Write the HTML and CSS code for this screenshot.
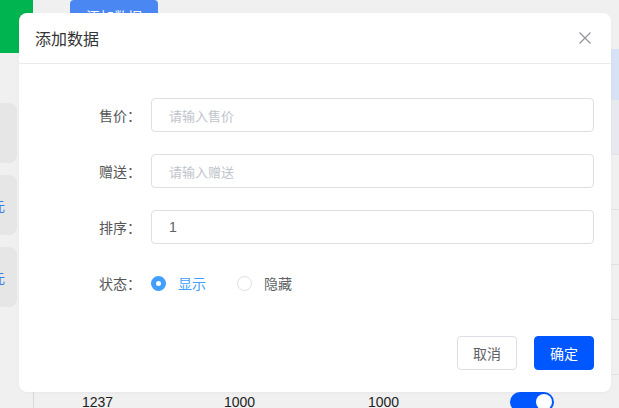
FILE: index.html
```html
<!DOCTYPE html>
<html lang="zh-CN">
<head>
<meta charset="utf-8">
<title>充值套餐</title>
<link rel="stylesheet" href="styles.css">
</head>
<body>
<div class="page">
  <aside class="side">
    <div class="logo"></div>
    <div class="cards">
      <div class="card"><span>充值</span></div>
      <div class="card"><span>100元</span></div>
      <div class="card"><span>500元</span></div>
    </div>
  </aside>
  <main class="main">
    <div class="toolbar">
      <button class="btn-add">添加数据</button>
    </div>
    <div class="table">
      <div class="row head"></div>
      <div class="row hover"></div>
      <div class="row"></div>
      <div class="row"></div>
      <div class="row"></div>
      <div class="row"></div>
      <div class="row">
        <span>1237</span>
        <span>1000</span>
        <span>1000</span>
        <span class="switch"><i></i></span>
      </div>
    </div>
  </main>

  <div class="dialog">
    <div class="dialog-head">
      <span class="dialog-title">添加数据</span>
      <svg class="close" width="12" height="12" viewBox="0 0 12 12"><path d="M0.5 0.5L11.5 11.5M11.5 0.5L0.5 11.5" stroke="#909399" stroke-width="1.2" fill="none"/></svg>
    </div>
    <form class="dialog-body">
      <div class="field">
        <label class="label">售价：</label>
        <div class="input"><span class="placeholder">请输入售价</span></div>
      </div>
      <div class="field">
        <label class="label">赠送：</label>
        <div class="input"><span class="placeholder">请输入赠送</span></div>
      </div>
      <div class="field">
        <label class="label">排序：</label>
        <div class="input"><span class="value">1</span></div>
      </div>
      <div class="field">
        <label class="label">状态：</label>
        <div class="radios">
          <span class="radio checked"><i></i>显示</span>
          <span class="radio"><i></i>隐藏</span>
        </div>
      </div>
    </form>
    <div class="dialog-foot">
      <button class="btn">取消</button>
      <button class="btn primary">确定</button>
    </div>
  </div>
</div>
</body>
</html>
```
FILE: styles.css
```css
* { box-sizing: border-box; }

html, body {
  margin: 0;
  padding: 0;
}

body {
  font-family: "Liberation Sans", "Noto Sans CJK SC", sans-serif;
  font-size: 14px;
  color: #606266;
  background: #f0f0f0;
}

button {
  font-family: inherit;
  font-size: 14px;
  cursor: pointer;
}

.page {
  position: relative;
  display: flex;
  width: 619px;
  height: 408px;
  overflow: hidden;
  background: #f0f0f0;
}

/* left navigation */
.side {
  width: 33px;
  flex: none;
}

.logo {
  height: 53px;
  background: #00b450;
}

.cards {
  margin-top: 50px;
  display: flex;
  flex-direction: column;
  gap: 12px;
}

.card {
  width: 17px;
  height: 60px;
  border-radius: 0 8px 8px 0;
  background: #e6e6e6;
  display: flex;
  align-items: center;
  justify-content: flex-end;
  padding-right: 12px;
  overflow: hidden;
  white-space: nowrap;
  color: #3d7fe0;
  font-size: 13px;
}

.card:first-child span { visibility: hidden; }

/* content */
.main {
  flex: 1;
  display: flex;
  flex-direction: column;
}

.toolbar {
  flex: none;
  height: 49px;
  padding-left: 37px;
}

.btn-add {
  width: 88px;
  height: 32px;
  border: none;
  border-radius: 4px;
  background: #4b87f3;
  color: #fff;
}

.table {
  flex: none;
  border-left: 1px solid #d9d9d9;
}

.row {
  height: 55px;
  border-bottom: 1px solid #e2e2e2;
  display: grid;
  grid-template-columns: 48px 142px 144px 142px 1fr;
  align-items: center;
  color: #222;
  font-size: 14px;
}

.row.head {
  height: 51px;
  background: #d7e2f5;
  border-bottom: none;
}

.row.hover {
  background: #e8e9ee;
}

.row span:first-child { grid-column: 2; }

.switch {
  position: relative;
  width: 44px;
  height: 20px;
  border-radius: 10px;
  background: #0057ff;
}

.switch i {
  position: absolute;
  right: 2px;
  top: 2px;
  width: 16px;
  height: 16px;
  border-radius: 50%;
  background: #fff;
}

/* dialog */
.dialog {
  position: absolute;
  left: 19px;
  top: 13px;
  width: 592px;
  background: #fff;
  border-radius: 8px;
  box-shadow: 0 1px 3px rgba(0, 0, 0, 0.04);
}

.dialog-head {
  height: 51px;
  border-bottom: 1px solid #ebebeb;
  display: flex;
  align-items: center;
  justify-content: space-between;
  padding: 0 20px 0 16px;
}

.dialog-title {
  font-size: 16px;
  color: #333;
}

.dialog-body {
  margin: 0;
  padding: 34px 17px 14px;
}

.field {
  display: flex;
  align-items: center;
  height: 34px;
  margin-bottom: 22px;
}

.label {
  width: 115px;
  flex: none;
  text-align: right;
  padding-right: 10px;
  color: #555;
  font-size: 14px;
}

.input {
  flex: 1;
  height: 34px;
  border: 1px solid #dcdfe6;
  border-radius: 4px;
  display: flex;
  align-items: center;
  padding-left: 17px;
}

.placeholder {
  color: #c0c4cc;
  font-size: 13px;
}

.value {
  color: #606266;
  font-size: 14px;
}

.radios {
  display: flex;
  align-items: center;
}

.radio {
  display: flex;
  align-items: center;
  margin-right: 31px;
  color: #606266;
  font-size: 14px;
}

.radio i {
  width: 15px;
  height: 15px;
  border-radius: 50%;
  border: 1px solid #dcdfe6;
  background: #fff;
  margin-right: 12px;
  box-sizing: border-box;
}

.radio.checked { color: #409eff; }

.radio.checked i {
  border: 5px solid #409eff;
  background: #fff;
}

.dialog-foot {
  display: flex;
  justify-content: flex-end;
  gap: 17px;
  padding: 0 17px 22px;
}

.btn {
  width: 60px;
  height: 34px;
  border: 1px solid #dcdfe6;
  border-radius: 4px;
  background: #fff;
  color: #606266;
}

.btn.primary {
  border-color: #0057ff;
  background: #0057ff;
  color: #fff;
}
```
